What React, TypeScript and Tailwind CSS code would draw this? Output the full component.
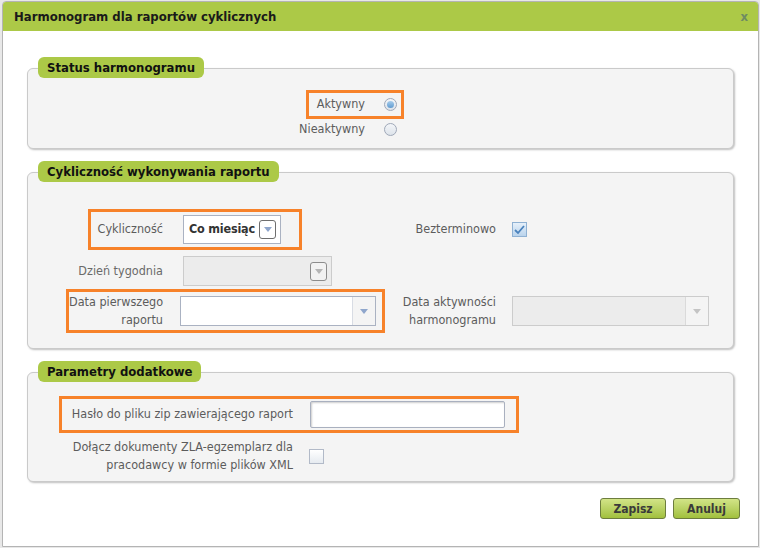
import React from "react";

const font = { fontFamily: '"DejaVu Sans Condensed", "DejaVu Sans", Tahoma, sans-serif' };

function Legend({ title }: { title: string }) {
    return (
        <div className="relative z-10 ml-[11px] -mb-[10px] self-start h-[21px] px-[9px] rounded-[6px] bg-[#acc947] flex items-center text-[13px] font-bold text-[#111] whitespace-nowrap">
            {title}
        </div>
    );
}

function Box({ title, className, children }: { title: string; className: string; children: React.ReactNode }) {
    return (
        <div className="flex flex-col mx-[24px]">
            <Legend title={title} />
            <div className={"border border-[#cacaca] rounded-[6px] bg-[#f4f4f4] shadow-[1px_1px_2px_rgba(0,0,0,0.25)] " + className}>
                {children}
            </div>
        </div>
    );
}

function Radio({ checked }: { checked?: boolean }) {
    return (
        <span className="w-[13px] h-[13px] rounded-full border border-[#9fa8b8] bg-gradient-to-b from-[#f4f6f9] to-[#dde3ea] flex items-center justify-center">
            {checked && <span className="w-[7px] h-[7px] rounded-full bg-gradient-to-b from-[#a8cdec] to-[#5f9bd0]" />}
        </span>
    );
}

function Arrow({ color }: { color: string }) {
    return (
        <svg width="8" height="5" viewBox="0 0 8 5">
            <path d="M0 0 L8 0 L4 5 Z" fill={color} />
        </svg>
    );
}

function SmallBtn({ disabled }: { disabled?: boolean }) {
    return (
        <span className={"w-[17px] h-[19px] rounded-[3px] border flex items-center justify-center " + (disabled ? "border-[#8c8c8c] bg-[#f2f2f2]" : "border-[#6e6e6e] bg-white")}>
            <Arrow color={disabled ? "#b5b5b5" : "#8fa6cc"} />
        </span>
    );
}

export default function App() {
    return (
        <div className="w-[760px] h-[548px] bg-[#e8e8e8]" style={font}>
            <div className="ml-[2px] pt-[1px] w-[757px]">
                <div className="h-[546px] bg-white border border-[#b4b4b4] rounded-t-[4px] flex flex-col overflow-hidden">
                    {/* naglowek */}
                    <div className="h-[29px] bg-[#acc947] flex items-center justify-between pl-[11px] pr-[10px]">
                        <span className="text-[13px] font-bold text-[#1a1a1a]">Harmonogram dla raportów cyklicznych</span>
                        <span className="text-[13px] font-bold text-[#6f8c62] leading-none">x</span>
                    </div>

                    <div className="mt-[26px] flex flex-col text-[12.5px] text-[#5c5c5c]">
                        {/* status */}
                        <Box title="Status harmonogramu" className="pt-[21px] pb-[9px]">
                            <div className="flex items-center ml-[278px]">
                                <div className="h-[29px] border-[3px] border-[#f7822a] flex items-center pr-[4px]">
                                    <span className="w-[56px] text-right">Aktywny</span>
                                    <span className="ml-[19px]"><Radio checked /></span>
                                </div>
                            </div>
                            <div className="flex items-center h-[20px] ml-[237px]">
                                <span className="w-[100px] text-right">Nieaktywny</span>
                                <span className="ml-[19px]"><Radio /></span>
                            </div>
                        </Box>

                        {/* cyklicznosc */}
                        <div className="mt-[12px]">
                            <Box title="Cykliczność wykonywania raportu" className="pt-[36px] pb-[15px]">
                                <div className="flex items-center">
                                    <div className="ml-[60px] h-[41px] border-[3px] border-[#f7822a] flex items-center pr-[18px]">
                                        <span className="w-[72px] text-right whitespace-nowrap">Cykliczność</span>
                                        <div className="ml-[20px] w-[98px] h-[29px] bg-white border border-[#aab2c2] flex items-center justify-between pl-[5px] pr-[4px]">
                                            <span className="text-[12.5px] font-bold text-[#333] whitespace-nowrap tracking-[-0.2px]">Co miesiąc</span>
                                            <SmallBtn />
                                        </div>
                                    </div>
                                    <span className="ml-[94px] w-[100px] text-right">Bezterminowo</span>
                                    <span className="ml-[16px] w-[15px] h-[15px] border border-[#8fb1d3] bg-gradient-to-b from-[#e6f0fa] to-[#b9d3ec] flex items-center justify-center">
                                        <svg width="11" height="10" viewBox="0 0 11 10">
                                            <path d="M1 5 L4 8 L10 1" stroke="#4a82bd" strokeWidth="1.8" fill="none" />
                                        </svg>
                                    </span>
                                </div>
                                <div className="flex items-center mt-[6px] h-[30px]">
                                    <span className="w-[135px] text-right text-[#6a6a6a]">Dzień tygodnia</span>
                                    <div className="ml-[20px] w-[149px] h-[30px] bg-[#ececec] border border-[#cccccc] flex items-center justify-end pr-[4px]">
                                        <SmallBtn disabled />
                                    </div>
                                </div>
                                <div className="flex items-center mt-[3px]">
                                    <div className="ml-[38px] h-[44px] border-[3px] border-[#f7822a] flex items-center pr-[6px]">
                                        <span className="w-[94px] text-right leading-[18px] whitespace-nowrap">Data pierwszego<br />raportu</span>
                                        <div className="ml-[17px] w-[196px] h-[30px] bg-white border border-[#aab2c2] flex justify-end">
                                            <span className="w-[23px] border-l border-[#d8dce4] bg-[#f4f4f4] flex items-center justify-center">
                                                <Arrow color="#8fa6cc" />
                                            </span>
                                        </div>
                                    </div>
                                    <span className="ml-[11px] w-[100px] text-right leading-[18px] whitespace-nowrap">Data aktywności<br />harmonogramu</span>
                                    <div className="ml-[16px] w-[197px] h-[30px] bg-[#ececec] border border-[#cccccc] flex justify-end">
                                        <span className="w-[23px] border-l border-[#dadada] bg-[#f4f4f4] flex items-center justify-center">
                                            <Arrow color="#c4c4c4" />
                                        </span>
                                    </div>
                                </div>
                            </Box>
                        </div>

                        {/* parametry */}
                        <div className="mt-[12px]">
                            <Box title="Parametry dodatkowe" className="pt-[23px] pb-[7px]">
                                <div className="flex items-center">
                                    <div className="ml-[31px] h-[37px] border-[3px] border-[#f7822a] flex items-center pr-[11px]">
                                        <span className="w-[231px] text-right whitespace-nowrap">Hasło do pliku zip zawierającego raport</span>
                                        <div className="ml-[17px] w-[195px] h-[27px] bg-white border border-[#a9b0bf] rounded-[2px] shadow-[inset_1px_1px_2px_rgba(0,0,0,0.2)]" />
                                    </div>
                                </div>
                                <div className="flex items-center mt-[5px] h-[36px]">
                                    <span className="w-[265px] text-right leading-[18px] whitespace-nowrap">Dołącz dokumenty ZLA-egzemplarz dla<br />pracodawcy w formie plików XML</span>
                                    <span className="ml-[16px] w-[15px] h-[15px] border border-[#b2bac8] bg-gradient-to-b from-[#ffffff] to-[#e6ebf0]" />
                                </div>
                            </Box>
                        </div>

                        <div className="mt-[16px] flex justify-end gap-[7px] mr-[18px]">
                            <button className="w-[66px] h-[21px] rounded-[3px] border border-[#6d7d3e] bg-gradient-to-b from-[#d2e487] to-[#a2c03c] text-[12px] font-bold text-[#3a3a3a]">Zapisz</button>
                            <button className="w-[67px] h-[21px] rounded-[3px] border border-[#6d7d3e] bg-gradient-to-b from-[#d2e487] to-[#a2c03c] text-[12px] font-bold text-[#3a3a3a]">Anuluj</button>
                        </div>
                    </div>
                </div>
            </div>
        </div>
    );
}
